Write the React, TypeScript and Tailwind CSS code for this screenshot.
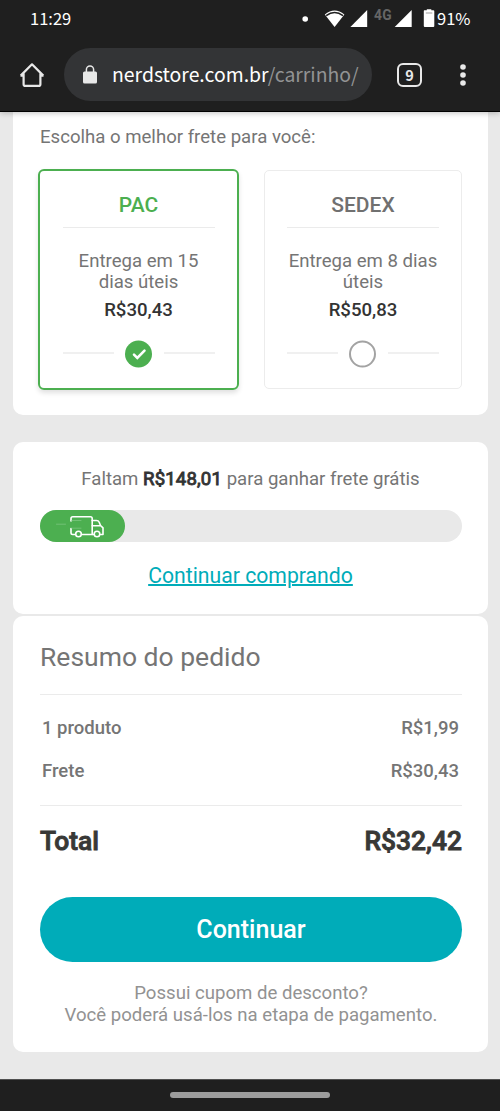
import React from "react";

function StatusBar() {
  return (
    <div className="flex h-[38px] items-center pl-[30px] font-['Noto_Sans_CJK_JP','Noto_Sans',sans-serif] text-[16.5px] leading-[38px] text-white">
      <span className="pb-[2px]">11:29</span>
      <svg className="ml-auto h-[38px] w-[134px] shrink-0" viewBox="0 0 134 38" fill="#fff">
        <circle cx="3.2" cy="19" r="2.8" />
        <path d="M22.8 14.4Q32.6 6.6 42.4 14.4L32.6 27Z" />
        <path d="M24.2 15.7Q32.6 9.2 41 15.7" fill="none" stroke="#1f1f1f" strokeWidth="1.6" />
        <path d="M65.2 10V27H48.4Z" />
        <path d="M109.700 10V27H92.700Z" />
        <path d="M122.300 10.200h2.500V9.200h4.500v1h2q1 0 1 1V26q0 1-1 1h-8.500q-1 0-1-1V11.200q0-1 .5-1z" />
        <path d="M123.800 13h6.500" stroke="#777" strokeWidth=".7" />
        <text x="72" y="20.300" fill="#666" fontFamily="Roboto" fontWeight="700" fontSize="13.800" letterSpacing="0.3">4G</text>
      </svg>
      <span className="mr-[30px] ml-px w-[33px] pb-[2px] whitespace-nowrap">91%</span>
    </div>
  );
}

function Toolbar() {
  return (
    <div className="flex h-[74px] items-start border-b border-black pt-[10px] font-['Noto_Sans_CJK_JP','Noto_Sans',sans-serif]">
      <svg className="mt-[14px] ml-[19px] h-[26px] w-[26px]" viewBox="0 0 26 26" fill="none" stroke="#e8e8e8" strokeWidth="2.2" strokeLinejoin="round">
        <path d="M1.7 13.600 13 2.300 24.300 13.600M4.600 11.500V22.200q0 1.700 1.700 1.700H19.700q1.700 0 1.700-1.700V11.500M1.500 13.700H5M21 13.700h3.500" />
      </svg>
      <div className="ml-[19px] flex h-[53px] w-[308px] items-center rounded-full bg-[#333436] pl-[19px]">
        <svg className="h-[19px] w-[14px]" viewBox="0 0 14 19">
          <rect x="0" y="6.500" width="14" height="12" rx="1.500" fill="#e8e8e8" />
          <path d="M3.400 7V4.600a3.600 3.600 0 0 1 7.200 0V7" fill="none" stroke="#e8e8e8" strokeWidth="1.500" />
        </svg>
        <span className="ml-[15px] pb-px text-[19.4px] leading-[52px] whitespace-nowrap text-white">
          nerdstore.com.br<span className="text-[#929394]">/carrinho/</span>
        </span>
      </div>
      <div className="mt-[15px] ml-[25px] flex h-[24px] w-[25px] items-center justify-center rounded-[6px] border-2 border-[#e8e8e8] pb-px text-[14.5px] leading-[19px] font-bold text-[#e8e8e8]">9</div>
      <svg className="mt-[15px] ml-[38px] h-[24px] w-[6px]" viewBox="0 0 6 24" fill="#e8e8e8">
        <circle cx="3" cy="4" r="2.800" />
        <circle cx="3" cy="12" r="2.800" />
        <circle cx="3" cy="20" r="2.800" />
      </svg>
    </div>
  );
}

type OptionProps = { name: string; lines: string[]; price: string; selected?: boolean };

function ShippingOption({ name, lines, price, selected }: OptionProps) {
  return (
    <div
      className={
        selected
          ? "flex h-[221px] w-[201px] flex-col items-center rounded-[6px] border-2 border-[#4caf50] pt-[22px] shadow-[0_3px_5px_rgba(0,0,0,0.12)]"
          : "mt-px ml-[25px] flex h-[219px] w-[198px] flex-col items-center rounded-[5px] border border-[#ececec] pt-[22px]"
      }
    >
      <div className={selected ? "text-[21px] leading-[24px] font-medium text-[#4caf50]" : "text-[21px] leading-[24px] font-medium text-[#707070]"}>
        {name}
      </div>
      <div className="mt-[10px] h-px w-[152px] bg-[#ebebeb]" />
      <div className="mt-[23px] text-center text-[18.6px] leading-[21px] text-[#757575]">
        {lines.map((l) => (
          <div key={l}>{l}</div>
        ))}
      </div>
      <div className="mt-[6px] text-[18.6px] leading-[22px] font-medium text-[#333]">{price}</div>
      <div className="mt-[19px] flex h-[28px] w-[152px] items-center justify-between">
        <div className="mb-[2px] h-[1.500px] w-[51px] bg-[#f0f0f0]" />
        <svg className="h-[28px] w-[28px]" viewBox="0 0 28 28" fill="none">
          {selected ? (
            <>
              <circle cx="13.500" cy="14" r="13.500" fill="#4caf50" />
              <path d="m9 14.700 3.300 3.300 7.200-7.300" stroke="#fff" strokeWidth="2.600" strokeLinecap="round" />
            </>
          ) : (
            <circle cx="13.500" cy="14" r="12.500" stroke="#a3a3a3" strokeWidth="2" />
          )}
        </svg>
        <div className="mb-[2px] h-[1.500px] w-[51px] bg-[#f0f0f0]" />
      </div>
    </div>
  );
}

function Truck() {
  return (
    <svg className="h-[32px] w-[85px]" viewBox="1 0 85 32" fill="none" stroke="#fff" strokeWidth="1.600" strokeLinecap="round" strokeLinejoin="round">
      <path d="M32 11V8.500Q32 6.800 33.700 6.800H51.500Q53.200 6.800 53.200 8.500V24.500H43M36 24.500H33.700Q32 24.500 32 22.800V18.500" />
      <path d="M53.200 10.500h4.200q2 0 2.800 1.800l1.400 3.400M53.200 15.700h8.600l2.200 2.200V24.500h-2.300M54.500 24.500h-1.300" />
      <circle cx="39.500" cy="24" r="2.800" />
      <circle cx="58" cy="24" r="2.800" />
      <path d="M33 10.500h9M33 18.200h9M17.500 14.200h9" stroke="#72c175" strokeWidth="1" />
    </svg>
  );
}

export default function App() {
  return (
    <div className="flex h-[1111px] w-[500px] flex-col overflow-hidden bg-[#e9e9e9] font-[Roboto,sans-serif]">
      <header className="relative h-[112px] shrink-0 bg-[#1f1f1f] shadow-[0_1px_6px_rgba(0,0,0,0.25)]">
        <StatusBar />
        <Toolbar />
      </header>

      <main className="flex h-[967px] shrink-0 flex-col pr-[12px] pl-[13px]">
        <section className="h-[303px] rounded-b-[10px] bg-white pt-[14px]">
          <p className="pl-[27px] text-[18.6px] leading-[22px] text-[#757575]">Escolha o melhor frete para você:</p>
          <div className="mt-[21px] flex items-start pl-[25px]">
            <ShippingOption name="PAC" lines={["Entrega em 15", "dias úteis"]} price="R$30,43" selected />
            <ShippingOption name="SEDEX" lines={["Entrega em 8 dias", "úteis"]} price="R$50,83" />
          </div>
        </section>

        <section className="mt-[27px] h-[172px] rounded-[10px] bg-white pt-[26px]">
          <p className="text-center text-[18.6px] leading-[22px] text-[#757575]">
            Faltam <span className="tracking-[0.15px] text-[#333] [-webkit-text-stroke:0.9px_#333]">R$148,01</span> para ganhar frete grátis
          </p>
          <div className="mt-[20px] ml-[26.5px] h-[32px] w-[422px] rounded-full bg-[#e9e9e9]">
            <div className="h-[32px] w-[85px] rounded-full bg-[#4caf50]">
              <Truck />
            </div>
          </div>
          <p className="mt-[22px] text-center text-[21.2px] leading-[24px] text-[#00acb9]">
            <a className="underline decoration-2 underline-offset-[1px]">Continuar comprando</a>
          </p>
        </section>

        <section className="mt-[2px] h-[436px] rounded-[10px] bg-white pt-[25px] pr-[26px] pl-[27px]">
          <h2 className="text-[26.5px] leading-[32px] text-[#757575]">Resumo do pedido</h2>
          <div className="mt-[21px] h-px bg-[#ebebeb]" />
          <div className="mt-[22px] flex justify-between pr-[3px] pl-[2px] text-[18.5px] leading-[22px] font-medium text-[#757575]">
            <span>1 produto</span>
            <span>R$1,99</span>
          </div>
          <div className="mt-[21px] flex justify-between pr-[3px] pl-[2px] text-[18.5px] leading-[22px] font-medium text-[#757575]">
            <span>Frete</span>
            <span>R$30,43</span>
          </div>
          <div className="mt-[23px] h-px bg-[#ebebeb]" />
          <div className="mt-[20px] flex justify-between text-[26.4px] leading-[30px] font-medium text-[#383836] [-webkit-text-stroke:0.9px_#383836]">
            <span>Total</span>
            <span>R$32,42</span>
          </div>
          <button className="mt-[41px] block h-[65px] w-full rounded-full bg-[#00acb9] text-[25px] leading-[65px] font-medium text-white">
            Continuar
          </button>
          <p className="mt-[20px] text-center text-[18.6px] leading-[22px] whitespace-nowrap text-[#929292]">
            Possui cupom de desconto?
            <br />
            Você poderá usá-los na etapa de pagamento.
          </p>
        </section>
      </main>

      <footer className="flex h-[32px] shrink-0 items-start justify-center border-t border-[#505050] bg-[#1f1f1f] pt-[12px]">
        <div className="h-[6px] w-[160px] rounded-full bg-[#9c9c9c]" />
      </footer>
    </div>
  );
}
